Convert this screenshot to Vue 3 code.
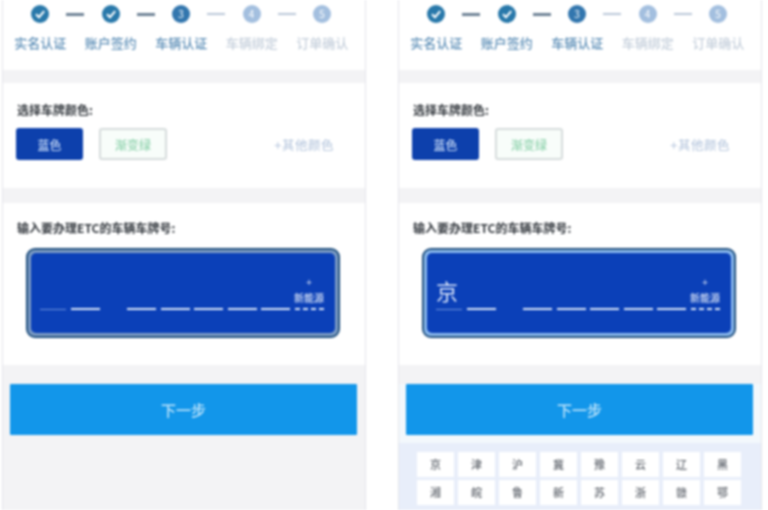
<script setup>
const phones = [
  { id: 'empty', province: '', keyboard: false },
  { id: 'typing', province: '京', keyboard: true }
]

const steps = [
  { label: '实名认证', state: 'done' },
  { label: '账户签约', state: 'done' },
  { label: '车辆认证', state: 'current', num: 3 },
  { label: '车辆绑定', state: 'todo', num: 4 },
  { label: '订单确认', state: 'todo', num: 5 }
]

const keys = ['京', '津', '沪', '冀', '豫', '云', '辽', '黑', '湘', '皖', '鲁', '新', '苏', '浙', '赣', '鄂']
</script>

<template>
  <div class="page">
    <div v-for="phone in phones" :key="phone.id" class="phone">
      <!-- Steps -->
      <section class="card steps">
        <div class="step-icons">
          <template v-for="(step, i) in steps" :key="step.label">
            <span class="dot" :class="step.state">
              <svg v-if="step.state === 'done'" viewBox="0 0 18 18" width="18" height="18">
                <path d="M5 9.2l3 3 5.2-6" fill="none" stroke="#fff" stroke-width="2" />
              </svg>
              <template v-else>{{ step.num }}</template>
            </span>
            <span v-if="i < steps.length - 1" class="dash" :class="{ strong: i < 2 }"></span>
          </template>
        </div>
        <div class="step-labels">
          <span v-for="step in steps" :key="step.label" :class="step.state">{{ step.label }}</span>
        </div>
      </section>

      <!-- Colour -->
      <section class="card colour">
        <h3 class="title">选择车牌颜色:</h3>
        <div class="colour-row">
          <button class="chip blue">蓝色</button>
          <button class="chip green">渐变绿</button>
          <span class="other">+其他颜色</span>
        </div>
      </section>

      <!-- Plate -->
      <section class="card plate-card">
        <h3 class="title">输入要办理ETC的车辆车牌号:</h3>
        <div class="plate" :class="{ active: phone.keyboard }">
          <div class="plate-inner">
            <div class="slot province">
              <span class="char">{{ phone.province }}</span>
              <i></i>
            </div>
            <div class="slot"><i></i></div>
            <div class="slot gap"><i></i></div>
            <div class="slot"><i></i></div>
            <div class="slot"><i></i></div>
            <div class="slot"><i></i></div>
            <div class="slot"><i></i></div>
            <div class="slot energy">
              <span class="plus">+</span>
              <span class="energy-label">新能源</span>
              <i></i>
            </div>
          </div>
        </div>
      </section>

      <div class="footer" :class="{ raised: phone.keyboard }">
        <button class="next">下一步</button>
        <div v-if="phone.keyboard" class="keyboard">
          <span v-for="k in keys" :key="k" class="key">{{ k }}</span>
        </div>
      </div>
    </div>
  </div>
</template>

<style scoped>
.page {
  width: 768px;
  height: 510px;
  overflow: hidden;
  background: #fff;
  display: flex;
  gap: 32px;
  padding-left: 2px;
  box-sizing: border-box;
  font-family: "Noto Sans CJK SC", "Liberation Sans", sans-serif;
  filter: blur(0.9px);
}
.phone {
  width: 364px;
  height: 510px;
  flex: none;
  display: flex;
  flex-direction: column;
  background: #f3f3f5;
  border-left: 1px solid #e4e5ea;
  border-right: 1px solid #e4e5ea;
  box-sizing: border-box;
}
.card { background: #fff; box-sizing: border-box; }

/* Steps */
.steps { height: 70px; padding-top: 5px; margin-bottom: 13px; }
.step-icons { display: flex; align-items: center; height: 18px; padding-left: 28px; gap: 17.25px; }
.dot {
  width: 18px;
  height: 18px;
  border-radius: 50%;
  flex: none;
  color: #fff;
  font-size: 10px;
  line-height: 18px;
  text-align: center;
}
.dot.done { background: #2878aa; }
.dot.current { background: #3276ae; }
.dot.todo { background: #a3bfdf; }
.dash { width: 18px; height: 2px; background: #b9c6d8; flex: none; }
.dash.strong { background: #6f8396; height: 3px; }
.step-labels { display: flex; margin-top: 12px; padding-left: 2px; }
.step-labels span { width: 70.5px; text-align: center; font-size: 13px; line-height: 16px; font-weight: 500; }
.step-labels .done, .step-labels .current { color: #5f90b8; }
.step-labels .todo { color: #c6d0dc; }

/* Section titles */
.title { margin: 0 0 0 1px; font-size: 12px; font-weight: 700; color: #33383e; line-height: 16px; }

/* Colour */
.colour { height: 105px; padding: 19px 13px 0; margin-bottom: 15px; }
.colour-row { display: flex; align-items: center; margin-top: 10px; }
.chip {
  height: 32px;
  padding: 0;
  font: inherit;
  font-size: 12px;
  font-weight: 500;
  border-radius: 3px;
}
.chip.blue { width: 67px; background: #0d40ac; border: 0; color: #c4d8f5; }
.chip.green { width: 68px; margin-left: 16px; background: #f8fdfa; border: 2px solid #d6dcdc; color: #93d4b0; }
.other { margin-left: auto; margin-right: 18px; font-size: 12.5px; letter-spacing: 0.5px; font-weight: 500; color: #bccbe0; }

/* Plate */
.plate-card { height: 162px; padding: 17px 13px 0; }
.plate {
  margin: 12px 0 0 10px;
  width: 314px;
  height: 90px;
  box-sizing: border-box;
  border: 2px solid #1f4f7e;
  border-radius: 9px;
  background: #7d9cc4;
  padding: 3px;
}
.plate.active { background: #8ab8ec; }
.plate-inner {
  height: 100%;
  background: #0b40b8;
  border-radius: 5px;
  display: flex;
  align-items: flex-end;
  padding: 0 11px 23px 9px;
  box-sizing: border-box;
  gap: 4.5px;
}
.slot {
  width: 29px;
  flex: none;
  display: flex;
  flex-direction: column;
  align-items: center;
  position: relative;
}
.slot i { display: block; width: 100%; height: 2px; background: #dbe6f8; }
.slot.province { width: 26px; }
.slot.province i { background: #6f93de; height: 1px; }
.slot.gap { margin-left: 23px; }
.char { color: #dbe6fa; font-size: 22px; line-height: 28px; margin-bottom: 5px; margin-left: -4px; }
.energy { color: #d5e0f5; }
.plus { font-size: 10px; line-height: 12px; margin-bottom: 4px; }
.energy-label { font-size: 10px; line-height: 12px; margin-bottom: 4px; white-space: nowrap; font-weight: 500; }
.energy i { background: repeating-linear-gradient(90deg, #dbe6f8 0 5px, transparent 5px 8px); }

/* Footer */
.footer { flex: 1; padding: 19px 8px 0 7px; display: flex; flex-direction: column; min-height: 0; }
.footer.raised { background: linear-gradient(#f3f3f5 0, #f3f3f5 19px, #f3f8fc 19px, #f3f8fc 78px, #e8eefa 78px); }
.next {
  flex: none;
  height: 51px;
  border: 0;
  background: #1296ea;
  color: #bfe4fb;
  font: inherit;
  font-size: 15px;
  font-weight: 500;
  border-radius: 1px;
}
.keyboard {
  margin: 17px 0 0 11px;
  display: grid;
  grid-template-columns: repeat(8, 37px);
  grid-auto-rows: 25px;
  gap: 2.5px 4px;
}
.key {
  background: #fff;
  text-align: center;
  font-size: 11px;
  line-height: 25px;
  font-weight: 500;
  color: #666b73;
}
</style>

<style>
html, body { margin: 0; overflow: hidden; background: #fff; }
</style>
